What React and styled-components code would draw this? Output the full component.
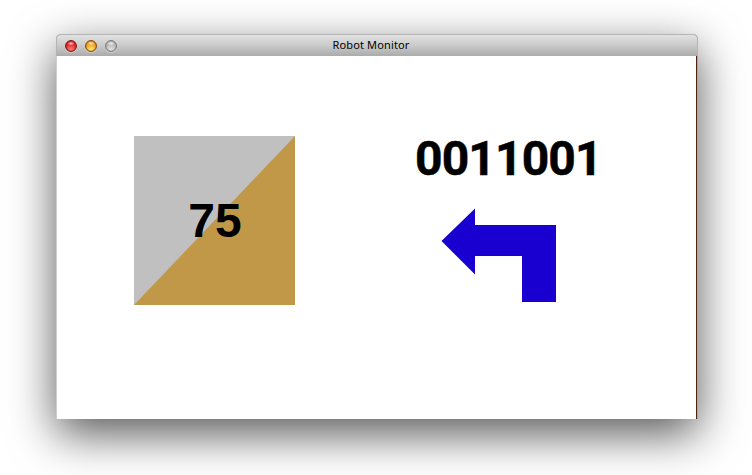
import React from "react";
import styled, { createGlobalStyle } from "styled-components";

const GlobalStyle = createGlobalStyle`
  body {
    margin: 0;
    background: #fff;
    overflow: hidden;
  }
`;

const Desktop = styled.main`
  box-sizing: border-box;
  width: 752px;
  height: 475px;
  padding: 34px 54px 56px 56px;
  overflow: hidden;
`;

const Window = styled.section`
  display: flex;
  flex-direction: column;
  width: 642px;
  height: 385px;
  border-radius: 5px 5px 0 0;
  background: #a8a8a8;
  box-shadow: 0 15px 46px rgba(0, 0, 0, 0.66);
`;

const TitleBar = styled.header`
  box-sizing: border-box;
  display: grid;
  grid-template-columns: 80px 1fr 80px;
  align-items: center;
  height: 22px;
  padding: 0 8px;
  border: 1px solid #b4b4b4;
  border-bottom: 0;
  border-radius: 5px 5px 0 0;
  background: linear-gradient(#e2e2e2, #cacaca 50%, #ababab);
`;

const Lights = styled.div`
  display: flex;
  gap: 8px;
  padding-top: 1px;
`;

const Light = styled.span`
  box-sizing: border-box;
  width: 12px;
  height: 12px;
  border: 1px solid ${(p) => p.$rim};
  border-radius: 50%;
  background:
    radial-gradient(ellipse 3.5px 2px at 50% 25%, rgba(255, 255, 255, 0.8), transparent),
    radial-gradient(circle at 50% 90%, ${(p) => p.$glow}, ${(p) => p.$fill} 60%);
  box-shadow: 0 1px 0 rgba(255, 255, 255, 0.4), inset 0 0 1px ${(p) => p.$rim};
`;

const Title = styled.h1`
  margin: 0;
  color: #000;
  font: 400 11px/18px "Noto Sans", "Open Sans", sans-serif;
  letter-spacing: 0.15px;
  text-align: center;
  padding: 0 12px 2px 0;
`;

const Content = styled.div`
  box-sizing: border-box;
  flex: 1;
  display: flex;
  align-items: flex-start;
  gap: 120px;
  margin-right: 1px;
  padding: 80px 0 0 77px;
  border-left: 1px solid #cfcfcf;
  border-right: 1px solid #54210f;
  background: #fff;
`;

const Gauge = styled.div`
  box-sizing: border-box;
  display: flex;
  align-items: center;
  justify-content: center;
  width: 161px;
  height: 169px;
  padding-left: 1px;
  background: linear-gradient(to bottom right, #c0c0c0 49.8%, #c09848 50.2%);
`;

const GaugeValue = styled.span`
  color: #000;
  font: 700 48px/48px "Liberation Sans", Arial, sans-serif;
`;

const BinaryCode = styled.span`
  color: #000;
  font: 700 48px/46px Roboto, Arial, sans-serif;
  letter-spacing: -0.88px;
  -webkit-text-stroke: 0.5px #000;
`;

const Status = styled.div`
  display: flex;
  flex-direction: column;
  align-items: flex-start;
`;

const TurnArrow = styled.svg`
  display: block;
  width: 115px;
  height: 95px;
  margin: 26px 0 0 26px;
  fill: #1900d0;
`;

const lights = [
  { name: "Close", rim: "#7d1c1c", fill: "#e02626", glow: "#ff8579" },
  { name: "Minimize", rim: "#8a4a10", fill: "#eda022", glow: "#fff07a" },
  { name: "Zoom", rim: "#7c7c7c", fill: "#b9b9b9", glow: "#e6e6e6" },
];

export default function App() {
  return (
    <Desktop>
      <GlobalStyle />
      <Window>
        <TitleBar>
          <Lights>
            {lights.map((l) => (
              <Light key={l.name} $rim={l.rim} $fill={l.fill} $glow={l.glow} />
            ))}
          </Lights>
          <Title>Robot Monitor</Title>
        </TitleBar>
        <Content>
          <Gauge>
            <GaugeValue>75</GaugeValue>
          </Gauge>
          <Status>
            <BinaryCode>0011001</BinaryCode>
            <TurnArrow viewBox="0 0 115 95">
              <path d="M.5 33 34 .5V17H115V94H81V48H34V66.5Z" />
            </TurnArrow>
          </Status>
        </Content>
      </Window>
    </Desktop>
  );
}
